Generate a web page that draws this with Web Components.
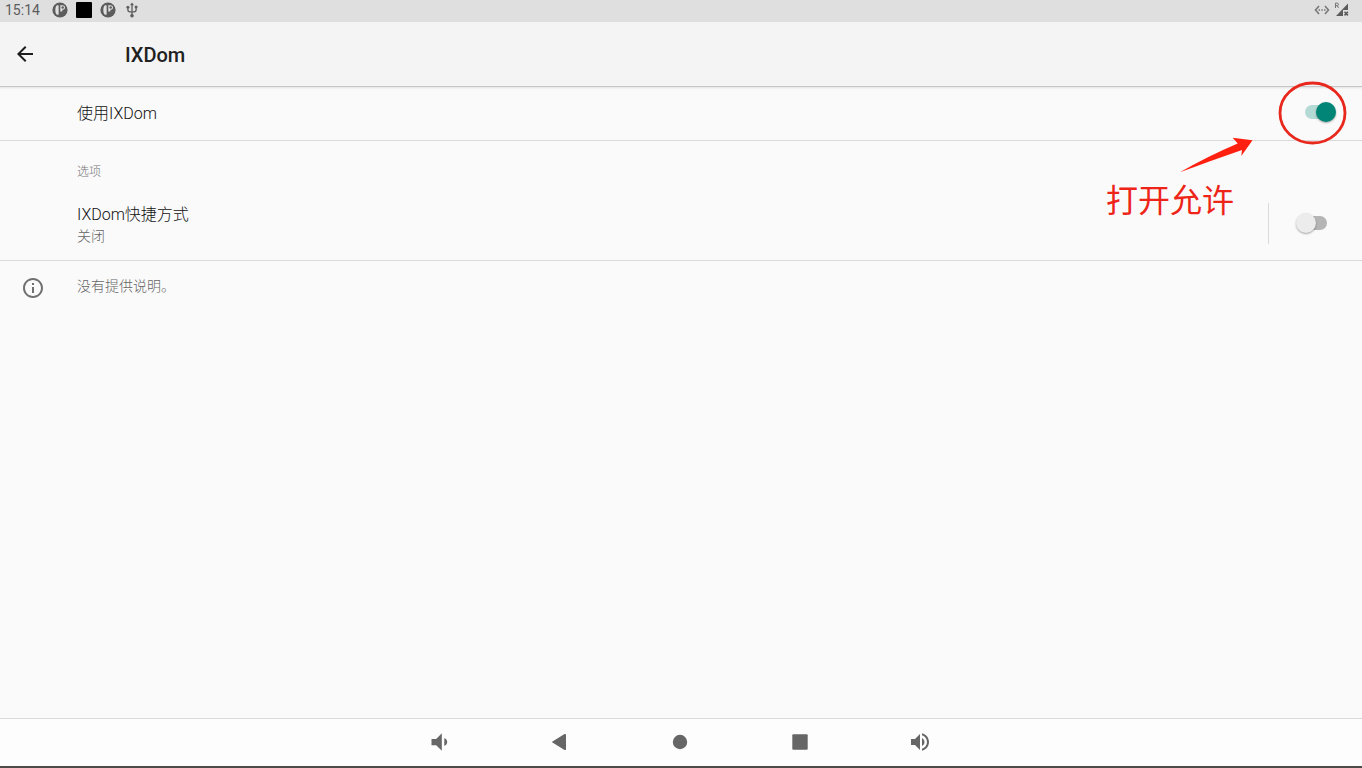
<!DOCTYPE html>
<html lang="zh-CN">
<head>
<meta charset="utf-8">
<meta name="viewport" content="width=device-width, initial-scale=1">
<title>IXDom</title>
<style>
    html, body {
        height: 100%;
        margin: 0;
    }
    body {
        font-family: Roboto, "Noto Sans CJK SC", sans-serif;
        background: #fafafa;
        color: #212121;
    }
</style>
</head>
<body>
<settings-page>
    <status-bar slot="status" time="15:14"></status-bar>
    <app-bar slot="bar">IXDom</app-bar>
    <setting-row checked>
        使用IXDom
        <callout-mark slot="callout">打开允许</callout-mark>
    </setting-row>
    <setting-group>
        <span slot="title">选项</span>
        <setting-row split>
            IXDom快捷方式
            <span slot="summary">关闭</span>
        </setting-row>
    </setting-group>
    <info-note>没有提供说明。</info-note>
    <nav-bar slot="nav"></nav-bar>
</settings-page>

<script>
class SettingsPage extends HTMLElement {
    constructor() {
        super();
        this.attachShadow({ mode: 'open' });
        this.shadowRoot.innerHTML = `
            <style>
                :host {
                    display: flex;
                    flex-direction: column;
                    min-height: 100%;
                }
                main { flex: 1; font-weight: 300; }
            </style>
            <slot name="status"></slot>
            <slot name="bar"></slot>
            <main><slot></slot></main>
            <slot name="nav"></slot>
        `;
    }
}

class StatusBar extends HTMLElement {
    constructor() {
        super();
        this.attachShadow({ mode: 'open' });
        // the same app notification shows on both sides of the black one
        const app = `
            <svg width="16" height="16" viewBox="0 0 16 16">
                <circle cx="8" cy="8" r="7.6" fill="#5c5c5c"/>
                <path d="M6.6 3.2H5C3.900 4 3.300 5.800 3.300 8s.6 4 1.700 4.800h1.600z" fill="#dfdfdf"/>
                <path d="M8.300 3.200h1.800c1.800 0 2.900.9 2.900 2.300S11.900 7.800 10.300 7.800V9.500h-2z" fill="#dfdfdf"/>
                <circle cx="10.700" cy="5.500" r="1.200" fill="#5c5c5c"/>
            </svg>`;
        this.shadowRoot.innerHTML = `
            <style>
                :host {
                    display: flex;
                    align-items: center;
                    justify-content: space-between;
                    height: 22px;
                    padding: 0 13px 2px 5px;
                    box-sizing: border-box;
                    background: #dfdfdf;
                    color: #5c5c5c;
                    font-size: 14px;
                }
                div { display: flex; align-items: center; gap: 8px; }
                .right { gap: 5px; }
                time { margin-right: 4px; }
                svg { display: block; }
            </style>
            <div>
                <time></time>
                ${app}
                <svg width="16" height="16" viewBox="0 0 16 16"><rect width="16" height="16" rx="1" fill="#000"/></svg>
                ${app}
                <svg width="16" height="16" viewBox="0 0 16 16" fill="none" stroke="#5c5c5c" stroke-width="1.300">
                    <path d="M8 3v10M3.900 6.200v1.600c0 1.500 1 2 2 2h4.200c1 0 2-.5 2-2V5.500"/>
                    <path d="M8 .4l2 2.900H6zM10.800 3.700h2.600v2.600h-2.600z" fill="#5c5c5c" stroke="none"/>
                    <circle cx="3.900" cy="5.200" r="1.500" fill="#5c5c5c" stroke="none"/>
                    <circle cx="8" cy="13.800" r="1.800" fill="#5c5c5c" stroke="none"/>
                </svg>
            </div>
            <div class="right">
                <svg width="16" height="16" viewBox="0 0 16 16" fill="none" stroke="#757575" stroke-width="1.500">
                    <path d="M5 4L1.500 8 5 12M11 4l3.500 4L11 12"/>
                    <path d="M4.500 8h1.500M7.300 8h1.500M10 8h1.500"/>
                </svg>
                <svg width="14" height="16" viewBox="0 0 14 16">
                    <path d="M13 1.500V8H8v6H1z" fill="#5c5c5c"/>
                    <path d="M9.500 9.800l3.400 3.600M12.900 9.800l-3.400 3.600" stroke="#5c5c5c" stroke-width="1.600"/>
                    <path d="M.5 6V1.100h1.700a1.200 1.200 0 0 1 0 2.500H.5M2.100 3.600L3.500 6" fill="none" stroke="#757575"/>
                </svg>
            </div>
        `;
    }

    connectedCallback() {
        this.shadowRoot.querySelector('time').textContent = this.getAttribute('time') || '';
    }
}

class AppBar extends HTMLElement {
    constructor() {
        super();
        this.attachShadow({ mode: 'open' });
        this.shadowRoot.innerHTML = `
            <style>
                :host {
                    display: flex;
                    align-items: center;
                    gap: 84px;
                    height: 64px;
                    padding-left: 9px;
                    background: #f4f4f4;
                    border-bottom: 1px solid #c6c6c6;
                    box-shadow: 0 1px 2px rgba(0, 0, 0, .1);
                }
                button {
                    display: flex;
                    padding: 4px;
                    border: 0;
                    background: none;
                    cursor: pointer;
                }
                h1 {
                    margin: 0;
                    padding-top: 2px;
                    font-size: 20px;
                    font-weight: 500;
                    line-height: 24px;
                }
            </style>
            <button type="button" aria-label="返回">
                <svg width="24" height="24" viewBox="0 0 24 24">
                    <path d="M20 11H7.830l5.590-5.590L12 4l-8 8 8 8 1.410-1.410L7.830 13H20v-2z" fill="#1c1c1c"/>
                </svg>
            </button>
            <h1><slot></slot></h1>
        `;
    }
}

class SettingRow extends HTMLElement {
    constructor() {
        super();
        this.attachShadow({ mode: 'open' });
        this.shadowRoot.innerHTML = `
            <style>
                :host {
                    display: flex;
                    align-items: center;
                    position: relative;
                    min-height: 53px;
                    padding: 0 26px 0 77px;
                    border-bottom: 1px solid #dadada;
                }
                :host([split]) {
                    min-height: 74px;
                    padding-right: 32px;
                }
                .text { flex: 1; display: flex; flex-direction: column; }
                :host([split]) .text { padding-top: 3px; }
                label { color: #111; font-size: 16px; line-height: 22px; }
                .summary {
                    color: #666;
                    font-size: 14px;
                    line-height: 20px;
                }
                .control { display: flex; align-items: center; padding-bottom: 3px; }
                :host([split]) .control {
                    height: 41px;
                    padding: 0 0 0 27px;
                    border-left: 1px solid #dadada;
                }
                input {
                    appearance: none;
                    display: flex;
                    align-items: center;
                    width: 34px;
                    height: 22px;
                    margin: 0;
                    padding: 0 3px;
                    box-sizing: border-box;
                    cursor: pointer;
                    position: relative;
                }
                input::before {
                    content: "";
                    flex: 1;
                    height: 14px;
                    border-radius: 7px;
                    background: #b5b5b5;
                }
                input::after {
                    content: "";
                    position: absolute;
                    left: 0;
                    width: 20px;
                    height: 20px;
                    border-radius: 50%;
                    background: #ececec;
                    box-shadow: 0 1px 2px rgba(0, 0, 0, .35);
                }
                input:checked::before { background: #b5d9d5; }
                input:checked::after {
                    left: auto;
                    right: 0;
                    background: #008577;
                }
            </style>
            <div class="text">
                <label for="toggle"><slot></slot></label>
                <span class="summary"><slot name="summary"></slot></span>
            </div>
            <div class="control"><input id="toggle" type="checkbox" role="switch"></div>
            <slot name="callout"></slot>
        `;
    }

    connectedCallback() {
        this.shadowRoot.querySelector('input').checked = this.hasAttribute('checked');
    }
}

class SettingGroup extends HTMLElement {
    constructor() {
        super();
        this.attachShadow({ mode: 'open' });
        this.shadowRoot.innerHTML = `
            <style>
                :host { display: block; }
                h2 {
                    margin: 0;
                    padding: 22px 0 5px 77px;
                    color: #757575;
                    font-size: 12px;
                    font-weight: 300;
                    line-height: 18px;
                }
            </style>
            <h2><slot name="title"></slot></h2>
            <slot></slot>
        `;
    }
}

class InfoNote extends HTMLElement {
    constructor() {
        super();
        this.attachShadow({ mode: 'open' });
        this.shadowRoot.innerHTML = `
            <style>
                :host {
                    display: flex;
                    align-items: flex-start;
                    gap: 32px;
                    padding: 15px 21px;
                    color: #666;
                }
                svg { display: block; }
                p { margin: 0; font-size: 14px; line-height: 20px; }
            </style>
            <svg width="24" height="24" viewBox="0 0 24 24">
                <path d="M11 7h2v2h-2zm0 4h2v6h-2zm1-9C6.480 2 2 6.480 2 12s4.480 10 10 10 10-4.480 10-10S17.520 2 12 2zm0 18c-4.410 0-8-3.590-8-8s3.590-8 8-8 8 3.590 8 8-3.590 8-8 8z" fill="#707070"/>
            </svg>
            <p><slot></slot></p>
        `;
    }
}

// Red ring round the switch, with an arrow and a caption below it
class CalloutMark extends HTMLElement {
    constructor() {
        super();
        this.attachShadow({ mode: 'open' });
        this.shadowRoot.innerHTML = `
            <style>
                :host {
                    position: absolute;
                    top: -6px;
                    right: 14px;
                    width: 242px;
                    color: #ee2418;
                    font-weight: 400;
                    pointer-events: none;
                }
                svg { display: block; }
                span {
                    display: block;
                    font-family: "Noto Sans CJK SC", sans-serif;
                    font-size: 32px;
                    line-height: 42px;
                }
            </style>
            <svg width="242" height="96" viewBox="0 0 242 96">
                <ellipse cx="206.500" cy="32" rx="32.500" ry="30" fill="none" stroke="#e8281c" stroke-width="2.800"/>
                <path d="M74 91.300Q100 76 131.700 62.500L126.700 56.700 146.500 59.300 135.300 75 136 69Q104 80 74 91.300z" fill="#ff2010"/>
            </svg>
            <span><slot></slot></span>
        `;
    }
}

class NavBar extends HTMLElement {
    constructor() {
        super();
        this.attachShadow({ mode: 'open' });
        this.shadowRoot.innerHTML = `
            <style>
                nav {
                    display: flex;
                    align-items: center;
                    justify-content: center;
                    gap: 88px;
                    height: 45px;
                    padding: 0 2px 2px 0;
                    background: #fdfdfd;
                    border-top: 1px solid #dadada;
                    border-bottom: 2px solid #4d4a4a;
                }
                button {
                    display: flex;
                    padding: 4px;
                    border: 0;
                    background: none;
                    cursor: pointer;
                }
                svg { fill: #666; }
            </style>
            <nav>
                <button type="button" aria-label="音量减">
                    <svg width="24" height="24" viewBox="0 0 24 24"><path d="M3.500 9v6.200h4.700l5.600 5.600V3.300L8.200 9zM16.300 8v8c1.700-.7 2.900-2.200 2.900-4s-1.200-3.300-2.900-4z"/></svg>
                </button>
                <button type="button" aria-label="返回">
                    <svg width="24" height="24" viewBox="0 0 24 24"><path d="M18 4.800v14.400c0 .8-.8 1.100-1.500.700L4.500 12.600c-.6-.4-.6-.8 0-1.200l12-7.300c.7-.4 1.500-.1 1.500.7z"/></svg>
                </button>
                <button type="button" aria-label="主页">
                    <svg width="24" height="24" viewBox="0 0 24 24"><circle cx="12" cy="12" r="7.200"/></svg>
                </button>
                <button type="button" aria-label="最近任务">
                    <svg width="24" height="24" viewBox="0 0 24 24"><rect x="4.300" y="4.300" width="15.400" height="15.400" rx="1"/></svg>
                </button>
                <button type="button" aria-label="音量加">
                    <svg width="24" height="24" viewBox="0 0 24 24"><path d="M3 9v6h4l5 5V4L7 9H3zm13.500 3c0-1.770-1.020-3.290-2.500-4.030v8.050c1.480-.73 2.500-2.250 2.500-4.020zM14 3.230v2.060c2.890.86 5 3.540 5 6.710s-2.110 5.850-5 6.710v2.060c4.010-.91 7-4.490 7-8.770s-2.990-7.860-7-8.770z"/></svg>
                </button>
            </nav>
        `;
    }
}

customElements.define('settings-page', SettingsPage);
customElements.define('status-bar', StatusBar);
customElements.define('app-bar', AppBar);
customElements.define('setting-row', SettingRow);
customElements.define('setting-group', SettingGroup);
customElements.define('info-note', InfoNote);
customElements.define('callout-mark', CalloutMark);
customElements.define('nav-bar', NavBar);
</script>
</body>
</html>
